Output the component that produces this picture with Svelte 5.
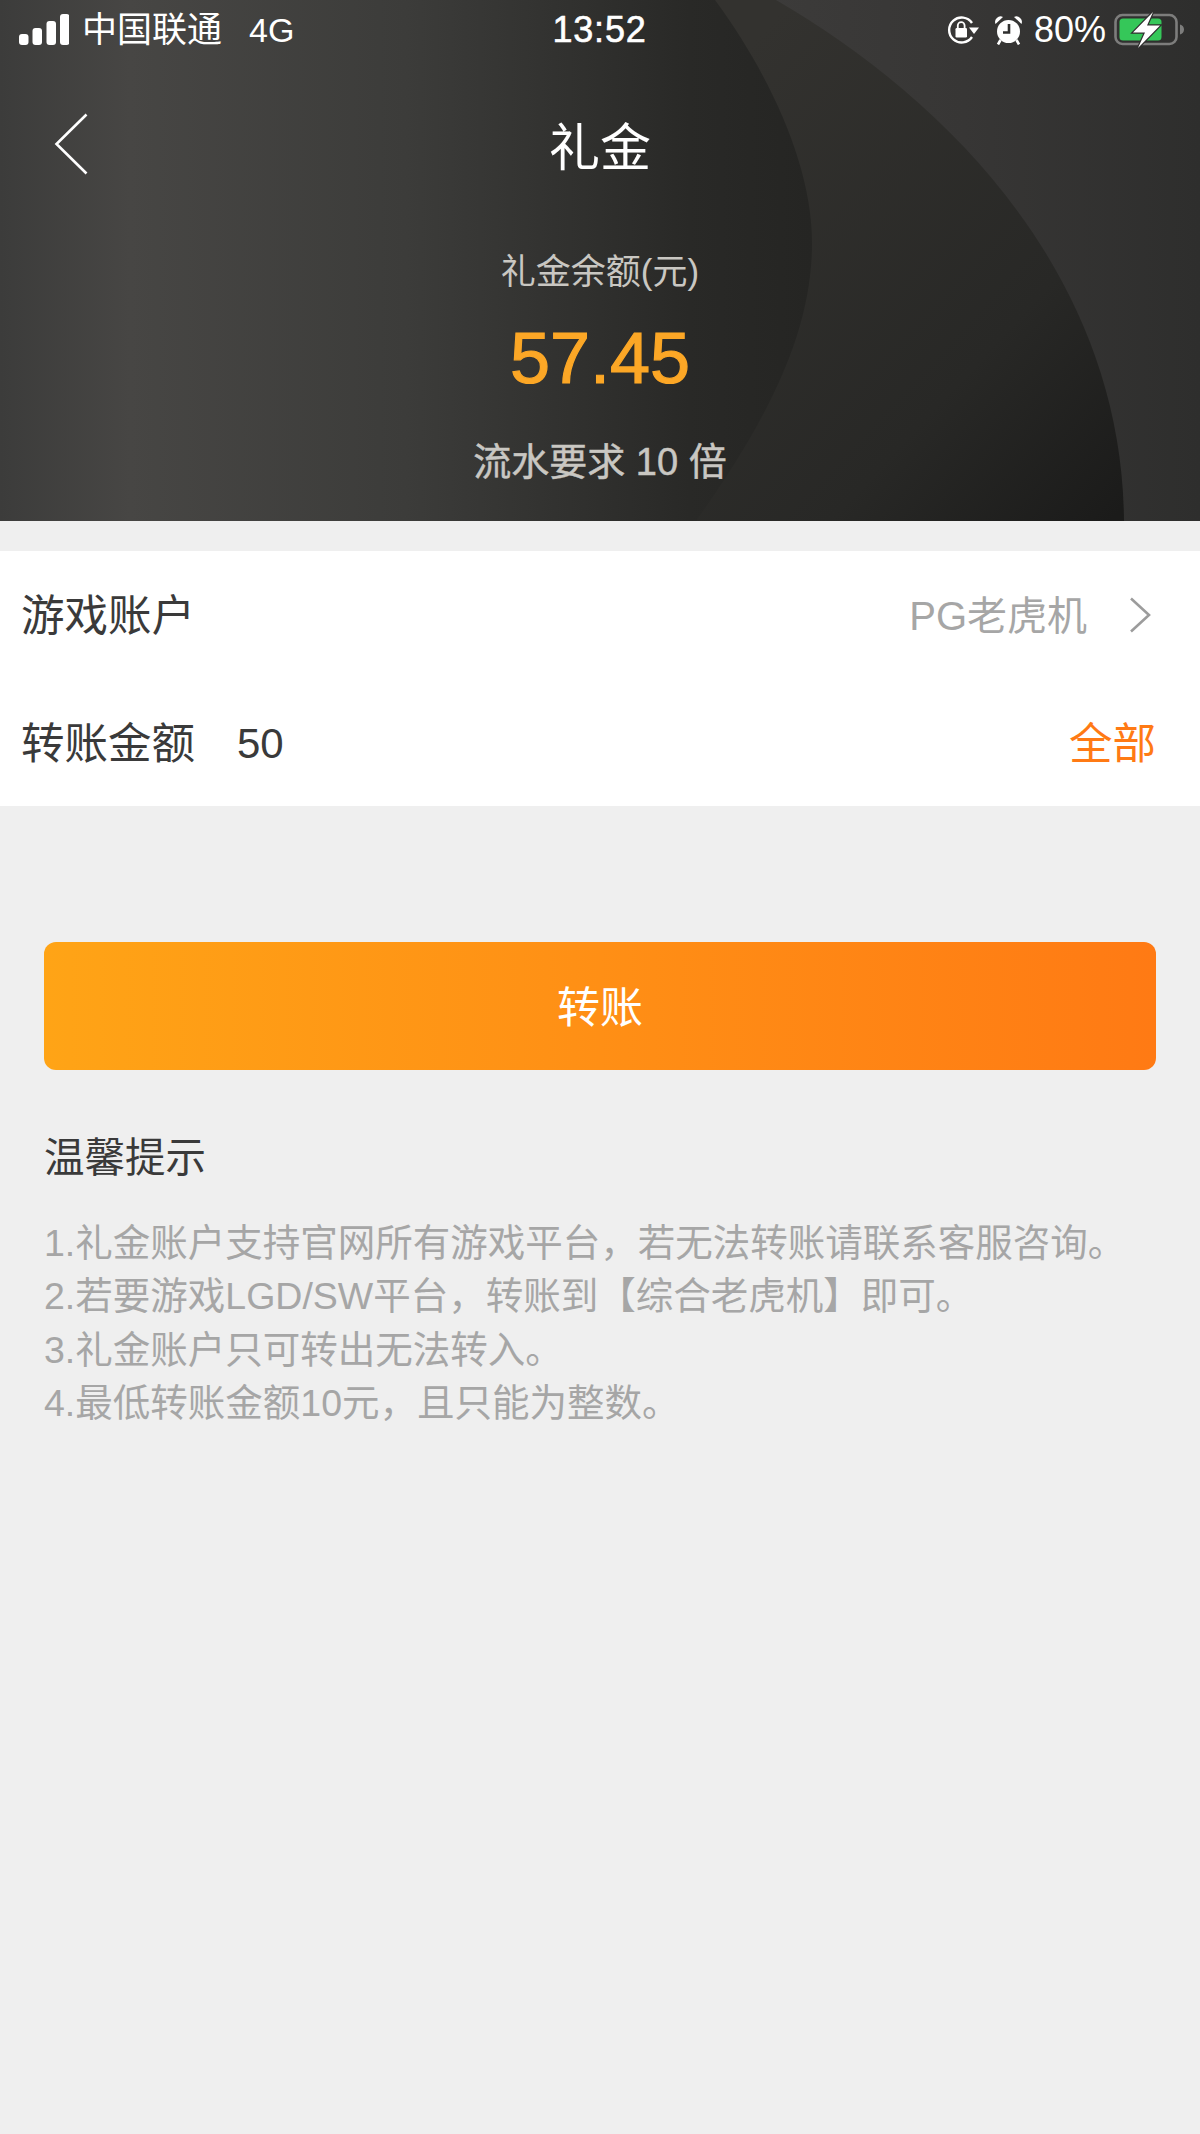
<script lang="ts">
  const tips = [
    "1.礼金账户支持官网所有游戏平台，若无法转账请联系客服咨询。",
    "2.若要游戏LGD/SW平台，转账到【综合老虎机】即可。",
    "3.礼金账户只可转出无法转入。",
    "4.最低转账金额10元，且只能为整数。",
  ]
</script>

<div class="page">
  <header class="hero">
    <svg class="waves" viewBox="0 0 1200 521" preserveAspectRatio="none" aria-hidden="true">
      <defs>
        <linearGradient id="right" x1="770" y1="0" x2="1200" y2="0" gradientUnits="userSpaceOnUse">
          <stop offset="0" stop-color="#3c3b3a" />
          <stop offset="0.45" stop-color="#373635" />
          <stop offset="1" stop-color="#2e2e2d" />
        </linearGradient>
        <linearGradient id="mid" x1="700" y1="100" x2="1130" y2="500" gradientUnits="userSpaceOnUse">
          <stop offset="0" stop-color="#33322f" />
          <stop offset="0.65" stop-color="#282826" />
          <stop offset="1" stop-color="#1b1b1a" />
        </linearGradient>
        <linearGradient id="left" x1="0" y1="0" x2="812" y2="0" gradientUnits="userSpaceOnUse">
          <stop offset="0" stop-color="#3c3c3b" />
          <stop offset="0.16" stop-color="#474644" />
          <stop offset="0.5" stop-color="#3c3c3a" />
          <stop offset="0.72" stop-color="#30302e" />
          <stop offset="0.85" stop-color="#292927" />
          <stop offset="1" stop-color="#252523" />
        </linearGradient>
      </defs>
      <rect width="1200" height="521" fill="url(#right)" />
      <path d="M776 0C940 95 1122 270 1124 521H640V0Z" fill="url(#mid)" />
      <path d="M715 0C770 75 812 165 812 243C812 340 760 430 696 521H0V0Z" fill="url(#left)" />
    </svg>

    <div class="status">
      <div class="status-left">
        <svg class="signal" width="50" height="32" viewBox="0 0 50 32" aria-hidden="true">
          <rect x="0" y="20" width="9.500" height="11" rx="3" />
          <rect x="13.500" y="14" width="9.500" height="17" rx="3" />
          <rect x="27.500" y="7" width="9.500" height="24" rx="3" />
          <rect x="41" y="0" width="9.500" height="31" rx="3" />
        </svg>
        <span class="carrier">中国联通</span>
        <span class="net">4G</span>
      </div>
      <div class="time">13:52</div>
      <div class="status-right">
        <svg class="lock" width="32" height="28" viewBox="0 0 32 28" aria-hidden="true">
          <path d="M25 7A12.500 12.500 0 1 0 25 21" fill="none" stroke="#fff" stroke-width="2.400" />
          <path d="M22 11.500h10l-5 6.500z" fill="#fff" />
          <rect x="8.500" y="12" width="11.500" height="9.500" rx="1.200" fill="#fff" />
          <path d="M10.800 12V9.600a3.400 3.400 0 0 1 6.800 0V12" fill="none" stroke="#fff" stroke-width="1.800" />
        </svg>
        <svg class="alarm" width="27" height="29" viewBox="0 0 27 29" aria-hidden="true">
          <circle cx="13.500" cy="15.500" r="11.500" fill="#fff" />
          <path d="M0.500 8A5.500 5.500 0 0 1 8 1ZM26.500 8A5.500 5.500 0 0 0 19 1Z" fill="#fff" />
          <path d="M5.500 24L3 28.500M21.500 24L24 28.500" stroke="#fff" stroke-width="2.600" />
          <path d="M14 8v8.500H8" fill="none" stroke="#2f2f2e" stroke-width="2.600" />
        </svg>
        <span class="pct">80%</span>
        <div class="battery">
          <svg width="71" height="36" viewBox="0 0 71 36" aria-hidden="true">
            <rect x="1.500" y="3" width="61" height="29" rx="7" fill="none" stroke="#7d7d7c" stroke-width="2.600" />
            <rect x="5.500" y="6.500" width="42" height="22" rx="3.500" fill="#35c759" />
            <path d="M66 12.500c2.500.8 4 2.500 4 5s-1.500 4.200-4 5z" fill="#7d7d7c" />
            <path d="M39 0L19 20.500h12L24 36 46 13.500H33Z" fill="#fff" stroke="#2f2f2e" stroke-width="2.400" paint-order="stroke" />
          </svg>
        </div>
      </div>
    </div>

    <div class="nav">
      <svg class="back" width="34" height="62" viewBox="0 0 34 62" aria-hidden="true">
        <path d="M32.500 1.500L2.500 31l30 29.500" fill="none" stroke="#fff" stroke-width="2.600" />
      </svg>
      <h1>礼金</h1>
    </div>

    <div class="label">礼金余额(元)</div>
    <div class="amount">57.45</div>
    <div class="req">流水要求 10 倍</div>
  </header>

  <section class="form">
    <div class="row">
      <span class="row-name">游戏账户</span>
      <span class="row-value">PG老虎机</span>
      <svg class="chevron" width="22" height="36" viewBox="0 0 22 36" aria-hidden="true">
        <path d="M2 1.500L20 18 2 34.500" fill="none" stroke="#9c9c9c" stroke-width="2.600" />
      </svg>
    </div>
    <div class="row">
      <span class="row-name">转账金额</span>
      <span class="row-input">50</span>
      <span class="row-all">全部</span>
    </div>
  </section>

  <button class="submit"><span>转账</span></button>

  <section class="tips">
    <h2>温馨提示</h2>
    {#each tips as tip}
      <p>{tip}</p>
    {/each}
  </section>
</div>

<style>
  :global(body) {
    margin: 0;
    background: #efefef;
  }

  .page {
    min-height: 2134px;
    background: #efefef;
    font-family: "Liberation Sans", "Noto Sans CJK SC", sans-serif;
    color: #3a3a3a;
  }

  .hero {
    position: relative;
    height: 521px;
    overflow: hidden;
    display: flex;
    flex-direction: column;
    align-items: center;
    color: #fff;
  }

  .waves {
    position: absolute;
    inset: 0;
    width: 100%;
    height: 100%;
  }

  .status, .nav, .label, .amount, .req {
    position: relative;
  }

  .status {
    align-self: stretch;
    height: 60px;
    display: grid;
    grid-template-columns: 1fr auto 1fr;
    align-items: center;
    padding: 0 15px 0 19px;
  }

  .status-left, .status-right {
    display: flex;
    align-items: center;
  }

  .status-right {
    justify-content: flex-end;
  }

  .signal {
    fill: #fff;
    margin-right: 13px;
  }

  .carrier {
    font-size: 35px;
    line-height: 60px;
  }

  .net {
    font-size: 34px;
    margin-left: 27px;
  }

  .time {
    font-size: 36px;
    font-weight: 400;
    letter-spacing: 0.8px;
    -webkit-text-stroke: 0.6px #fff;
    margin-right: 5px;
  }

  .lock {
    margin-right: 16px;
  }

  .alarm {
    margin-right: 12px;
  }

  .pct {
    font-size: 36px;
    margin-right: 8px;
  }

  .battery {
    display: flex;
    height: 36px;
  }

  .nav {
    align-self: stretch;
    margin-top: 39px;
    height: 90px;
    display: flex;
    align-items: center;
    justify-content: center;
  }

  .back {
    position: absolute;
    left: 54px;
    top: 14px;
  }

  h1 {
    margin: 0;
    font-size: 51px;
    font-weight: 400;
  }

  .label {
    margin-top: 58px;
    font-size: 35px;
    line-height: 50px;
    color: #c9c7c2;
  }

  .amount {
    margin-top: 16px;
    font-size: 72px;
    line-height: 90px;
    color: #fca726;
    -webkit-text-stroke: 1.200px #fca726;
  }

  .req {
    margin-top: 34px;
    font-size: 38px;
    line-height: 50px;
    color: #c9c7c2;
    -webkit-text-stroke: 0.5px #c9c7c2;
  }

  .form {
    margin-top: 30px;
    background: #fff;
  }

  .row {
    height: 127.500px;
    padding: 0 44px 0 21px;
    display: flex;
    align-items: center;
    font-size: 43.500px;
  }

  .row-name {
    position: relative;
    top: -2px;
  }

  .row-value {
    margin-left: auto;
    color: #a6a6a6;
    font-size: 40px;
    position: relative;
    top: -2px;
  }

  .chevron {
    margin: 0 5px 0 42px;
  }

  .row-input {
    margin-left: 42px;
    font-size: 42px;
    position: relative;
    top: 2px;
  }

  .row-all {
    margin-left: auto;
    color: #ff7a14;
    position: relative;
    top: -2px;
  }

  .submit {
    display: block;
    width: 1112px;
    height: 128px;
    margin: 136px 44px 0;
    padding: 0 0 4px;
    border: 0;
    border-radius: 12px;
    background: linear-gradient(90deg, #ffa416, #ff7a14);
    color: #fff;
    font-family: inherit;
    font-size: 43px;
  }

  .tips {
    padding: 58px 44px 0;
  }

  h2 {
    margin: 0 0 29px 0;
    font-size: 40.500px;
    font-weight: 400;
    line-height: 60px;
    color: #3a3a3a;
  }

  p {
    margin: 0;
    font-size: 37.500px;
    line-height: 53.300px;
    color: #a6a6a6;
    white-space: nowrap;
  }
</style>
